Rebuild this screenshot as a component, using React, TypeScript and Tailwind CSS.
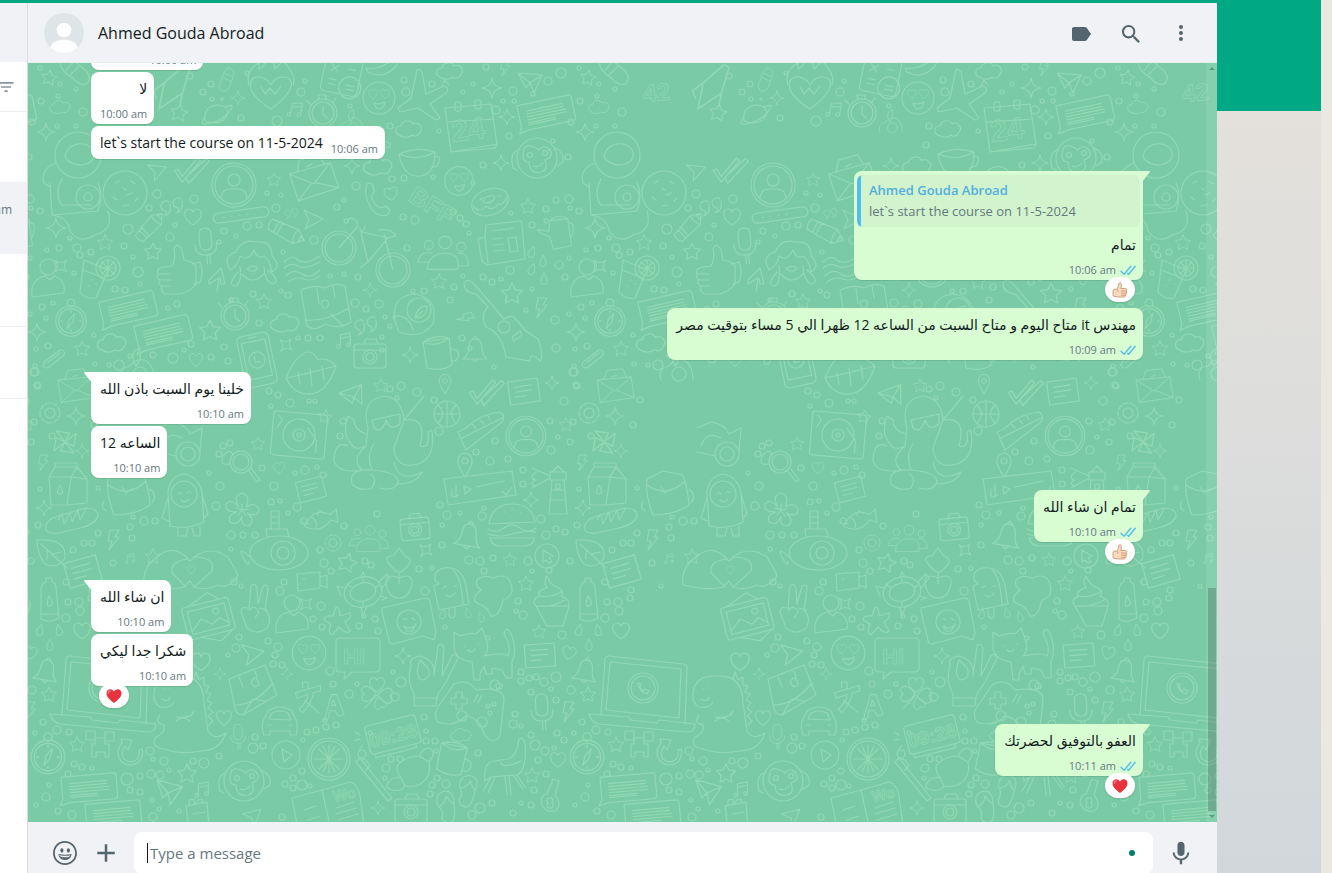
import type { ReactNode } from 'react';
import { MdLabel, MdFilterList } from 'react-icons/md';

type Reaction = 'like' | 'love';

interface Message {
  id: number;
  text: string;
  time: string;
  out?: boolean;
  rtl?: boolean;
  tail?: boolean;
  quote?: { author: string; text: string };
  reaction?: Reaction;
}

const messages: Message[] = [
  { id: 1, text: 'تمام يا هندسه ان', time: '10:00 am', rtl: true },
  { id: 2, text: 'لا', time: '10:00 am', rtl: true },
  { id: 3, text: 'let`s start the course on 11-5-2024', time: '10:06 am' },
  {
    id: 4,
    text: 'تمام',
    time: '10:06 am',
    out: true,
    rtl: true,
    tail: true,
    quote: { author: 'Ahmed Gouda Abroad', text: 'let`s start the course on 11-5-2024' },
    reaction: 'like',
  },
  {
    id: 5,
    text: 'مهندس it متاح اليوم و متاح السبت من الساعه 12 ظهرا الي 5 مساء بتوقيت مصر',
    time: '10:09 am',
    out: true,
    rtl: true,
  },
  { id: 6, text: 'خلينا يوم السبت باذن الله', time: '10:10 am', rtl: true, tail: true },
  { id: 7, text: 'الساعه 12', time: '10:10 am', rtl: true },
  { id: 8, text: 'تمام ان شاء الله', time: '10:10 am', out: true, rtl: true, tail: true, reaction: 'like' },
  { id: 9, text: 'ان شاء الله', time: '10:10 am', rtl: true, tail: true },
  { id: 10, text: 'شكرا جدا ليكي', time: '10:10 am', rtl: true, reaction: 'love' },
  { id: 11, text: 'العفو بالتوفيق لحضرتك', time: '10:11 am', out: true, rtl: true, tail: true, reaction: 'love' },
];

/* ---------- wallpaper ---------- */

const HEART = 'M0 8C-12 0-9-8-4-8C-1-8 0-5 0-5C0-5 1-8 4-8C9-8 12 0 0 8Z';
const STAR = 'M0-10L2.9-4L9.5-3.1L4.8 1.5L5.9 8.1L0 5L-5.9 8.1L-4.8 1.5L-9.5-3.1L-2.9-4Z';

const shapes: Record<string, ReactNode> = {
  star: <path d={STAR} />,
  sparkle: <path d="M0-10Q1-1 10 0Q1 1 0 10Q-1 1-10 0Q-1-1 0-10Z" />,
  heart: <path d={HEART} />,
  drop: <path d="M0-7C3-2 4 0 4 3A4 4 0 0 1-4 3C-4 0-3-2 0-7Z" />,
  cloud: <path d="M-10 6C-15 4-14-3-8-3C-7-9 2-10 4-5C10-8 15-1 11 3C10 7 5 8 3 6C0 9-6 9-10 6Z" />,
  bolt: <path d="M-3-10L6-10L2-3L6-3L-4 10L-1 1L-5 1Z" />,
  music: (
    <>
      <path d="M-4 6V-7L7-9V4M-4-3L7-5" />
      <circle cx="-6" cy="6" r="2" />
      <circle cx="5" cy="4" r="2" />
    </>
  ),
  smile: (
    <>
      <circle r="16" />
      <path d={HEART} transform="translate(-6 -4) scale(.55)" />
      <path d={HEART} transform="translate(6 -4) scale(.55)" />
      <path d="M-5 5Q0 7 6 4Q5 11 0 11Q-4 10-5 5Z" />
    </>
  ),
  avatar: (
    <>
      <circle r="22" />
      <circle r="19" />
      <circle cy="-5" r="6" />
      <path d="M-13 13C-12 3-5 4 0 4S12 3 13 13" />
    </>
  ),
  message: (
    <path d="M-27-13H25Q28-13 28-10V10Q28 13 25 13H-20L-30 15L-27 9ZM-19-6H18M-19-3H18M-19 0H20M-19 3H20M-19 6H8M-19 8H8" />
  ),
  card: <path d="M-15-12H15V11H-15ZM-9-6H8M-9-1H8M-9 4H2" />,
  plane: <path d="M-12-10L12-8L4 10L0 0ZM0 0L12-8M-12-10L-4 5L0 0" />,
  arrow: <path d="M-9-9L10 0L-8 10L-4 1Z" />,
  clock: (
    <>
      <circle r="14" />
      <circle r="11" />
      <path d="M0-7V1L4 5M-4-14L-5-18H3L3-14M-13-9L-17-13M10-11L13-15" />
    </>
  ),
  compass: (
    <>
      <circle r="16" />
      <circle r="13" />
      <circle cy="-19" r="4" />
      <path d="M4-8L2 1L-4 8L-2-1ZM-11 0H-9M9 0H11M0-11V-9M0 9V11" />
    </>
  ),
  envelope: <path d="M-22-10L20-14L24 12L-18 18ZM-22-10L0 4L20-14M-18 18L-2 3M24 12L2 3M-14-11L-10-22L10-24L14-13M-4-14L2-16" />,
  calendar: (
    <>
      <path d="M-24-20L22-24L28 16L-18 24ZM-18 24L26 20L28 16M-22-6L25-9" />
      <rect x="-14" y="-26" width="6" height="9" rx="2" />
      <rect x="6" y="-28" width="6" height="9" rx="2" />
    </>
  ),
  jet: <path d="M-3-30Q-1-32 2-28L6-6L24-14Q30-12 26-7L10 4L20 18L16 20L-2 8L-20 12L-22 8L-9-2ZM22-14L25-20L29-15" />,
  fire: (
    <>
      <path d="M0 24C-30 5-22-10-10-8Q-3-6 0 0Q4-8 12-8C24-8 26 5 0 24Z" />
      <path d="M-22 0Q-26-15-12-22L-12-16Q-6-18-4-28Q4-24 4-16L12-24Q26-10 22 0M-10 2L-6 9L-1 3L4 9L10 1" />
    </>
  ),
  tiles: (
    <>
      <rect x="-19" y="-18" width="37" height="36" rx="4" />
      <path d="M-12-10L-5-3M-5-10L-12-3M5-8H12M-12 5H-5M-12 10H-5" />
      <circle cx="10" cy="10" r="11" />
      <path d="M6 8H14M6 12H14" />
    </>
  ),
  banana: <path d="M-16 2Q0 4 12-8Q18-6 14 0Q2 14-14 6Z" />,
  capsule: <path d="M-8-16Q0-20 5-10L10 4Q12 14 4 16Q-4 14-5 4Q-12-8-8-16ZM-7-6L2-9M-5 0L6-3" />,
  cup: <path d="M-18-8Q0-16 18-10Q18 12 4 14Q-14 16-18-8ZM-18-8Q0 0 18-10M18-6Q26-6 20 4L14 6" />,
  mug: (
    <>
      <path d="M-14-11L12-15L15 12Q4 19-10 15ZM-14-11Q0-5 12-15Q0-19-14-11" />
      <path d="M13-4Q24-4 21 5Q19 9 14 8" />
    </>
  ),
  monkey: (
    <>
      <circle r="20" />
      <path d="M-14-2Q-14-14-6-12Q0-10 2-8Q6-14 12-9Q18-2 8 2Q12 12 4 14Q-8 16-8 4Q-14 4-14-2ZM-4 8Q2 10 6 5M-18-8Q-28-6-24 10L-20 12M18-10Q28-6 26 4L20 8" />
      <circle cx="-7" cy="-3" r="2.5" />
      <circle cx="8" cy="-5" r="2.5" />
    </>
  ),
  astronaut: (
    <>
      <circle cx="0" cy="-10" r="23" />
      <path d="M-13-8C-10-26 14-24 16-12C18 2-6 4-13-8ZM-22-2Q-38 4-34 18L-28 22M-28 18L-26 50L20 46Q26 30 20 18M-26 50Q-10 52-8 66Q2 80 16 70Q36 66 30 46M-16 14Q-24 30-16 40H14" />
      <circle cx="10" cy="32" r="12" />
      <circle cx="10" cy="32" r="4" />
    </>
  ),
  cookie: (
    <>
      <circle r="22" strokeDasharray="9 1" />
      <path d="M-10-10L-6-12M6-12L10-9M-12 4L-8 7M2 2L7 0M-2 13L4 12M10 8L13 5M-2-5L1-3" />
    </>
  ),
  receiver: <path d="M-10-16Q-4-20-3-8Q-8-4-2 4Q4 10 8 6Q16 10 10 15Q-2 18-8 4Q-14-8-10-16Z" />,
  donut: (
    <>
      <ellipse rx="19" ry="13" transform="rotate(-20)" />
      <ellipse cy="-3" rx="6" ry="3" transform="rotate(-20)" />
      <path d="M-17 4Q-10 12-4 4Q2 10 8 2Q14 4 17-6M-10-2L-8-4M8-6L11-6M-2 1L1 1" />
    </>
  ),
  pill: (
    <>
      <rect x="-28" y="-5" width="56" height="10" rx="5" />
      <path d="M-18 0h1M-10 0h1M-2 0h1M6 0h1" />
    </>
  ),
  quotes: <path d="M-4-6A5 5 0 1 0-7 3Q-6 7-9 8Q-1 6-3-4M8-9A5 5 0 1 0 5 0Q6 4 3 5Q11 3 9-7" />,
  pencil: <path d="M-18-5L10-8L20-1L11 7L-17 6Q-20 0-18-5ZM-11-6V6M-7-7V6M10-8Q7-1 11 7M20-1L15-3V3Z" />,
  bike: (
    <>
      <circle cx="-27" cy="0" r="17" />
      <circle cx="-27" cy="0" r="14" />
      <circle cx="27" cy="22" r="17" />
      <circle cx="27" cy="22" r="14" />
      <path d="M-27 0L-8-22Q-10-32-18-29M-6-20L2 14L22-10L-4-16M2 14L-6 20M27 22L18-14M12-18Q26-20 30-12L20-10M-4-16L-1-22" />
    </>
  ),
  people: (
    <>
      <circle cy="-14" r="7" />
      <path d="M-20 16Q-18-2 0-2T14 16Z" />
      <circle cx="-18" cy="-11" r="5" />
      <circle cx="18" cy="-9" r="5" />
      <path d="M-19 8H-30Q-28-5-14-2M16 12H26Q26-4 14-2" />
    </>
  ),
  person: (
    <>
      <circle cy="-15" r="8" />
      <path d="M-16 15Q-18-3-3-6L2-2L6-6Q18-2 16 11Z" />
    </>
  ),
  news: <path d="M-16-18L18-22Q20-22 20-18L23 16L-15 22L-20 18L-24-4L-17-6ZM-10-12L12-15M-10-4L0-5M-9 2L1 1M-8 8L2 7M6-5L14-6L16 8L8 9ZM-17-6L-14 20" />,
  teapot: <path d="M-8-16L12-18L16 12L-4 16L-8 2L-18-2L-22-6Q-16-6-9-4ZM12-14Q22-14 16 2M-8-16Q0-24 12-18" />,
  mic: <path d="M-6-12Q-6-18 0-18T6-12V-2Q6 4 0 4T-6-2ZM-11-2Q-11 9 0 9T11-2M0 9V18M3 9V18" />,
  wig: (
    <>
      <path d="M-22 8Q-30-6-16-10Q-10-24 4-20Q20-22 20-6Q30 4 20 10Q18-2 12-6Q6-2 2-12Q-4 0-12-6Q-14 4-22 8ZM-14 10Q-26 24-16 24Q-10 20-12 4M16 8Q30 20 20 22Q12 18 12 4M-10 12Q0 24 12 12" />
      <path d="M-5 7Q0 2 6 6Q2 12-5 7Z" />
    </>
  ),
  up: <path d="M0 12L2-2L-8 4L-8 0L4-12L8 4L4 4L3-2" />,
  waves: <path d="M-18-6Q-10-14-4-8T18-12M-18 0Q-10-6-4-2T18-6M-16 8Q-8 0 0 6T18 2M-14 14Q-6 8 2 11T18 8" />,
  notebook: <path d="M-24-16Q-10-22 0-18Q10-24 20-20L26 16Q14 24 0 18Q-10 26-18 20ZM-20 14Q0 16 24 2M-8-18L-6-2M8-20L10-8M6 8L18 20M-2 2Q-6-5 0-6Q6-5 2 2Z" />,
  guitar: (
    <>
      <path d="M-38-44Q-34-50-27-42L2-8Q8-12 12-10L24 4L36 12Q42 30 38 34Q28 24 28 34L4 30Q0 6-16 0Q-22-12-14-20L-26-33Q-38-34-38-44Z" />
      <circle cx="2" cy="0" r="6" />
      <path d="M10 10L18 4L20 8L12 14Z" />
    </>
  ),
  parrot: (
    <>
      <path d="M-20 2Q-24-22 0-24Q24-20 18 6Q6 22-16 14L-22-2Q-6-4-2 12" />
      <circle cx="4" cy="-8" r="12" />
      <path d="M0 0Q2-12 12-12Q12 0 0 0L8-7" />
    </>
  ),
  phone: (
    <>
      <rect x="-16" y="-26" width="32" height="52" rx="5" />
      <rect x="-12" y="-19" width="24" height="37" />
      <circle r="8" />
      <path d="M-2-4V2H3M-4-23H4" />
    </>
  ),
  lips: <path d="M-26 8Q-16-16-4-18Q2-18 6-10Q14-14 24-4Q14 26-6 24Q-20 22-26 8ZM-26 8Q-6 4 24-4M-14 2L-12 14M-2-2L0 16M10-4L12 10" />,
  camera: (
    <>
      <rect x="-16" y="-11" width="32" height="24" rx="3" />
      <path d="M-6-11L-4-16H6L8-11M-16-5H16" />
      <circle cy="2" r="7" />
      <circle cy="2" r="4" />
    </>
  ),
  bell: <path d="M-12 8Q-6 4-6-4Q-6-12 0-12T7-4Q7 4 12 8ZM-2-12Q0-17 3-12M-3 8Q0 13 3 8" />,
  clip: <path d="M-10 4L6-8Q12-8 10-3L-6 10Q-13 10-10 4ZM-6 4L6-5" />,
  glass: (
    <>
      <path d="M-12-18L12-8L0 20Q-10 22-16 14ZM-13-8L8 0M-5 2h1M-8 8h1M0 6h1" />
      <circle cx="12" cy="-10" r="12" />
      <circle cx="12" cy="-10" r="8" />
      <path d="M12-18V-2M4-10H20M6-16L18-4M18-16L6-4" />
    </>
  ),
  octopus: (
    <path d="M-22 8Q-36 2-36 24Q-30 36-8 32Q-20 22-4 8L-2-10Q-10-38 14-42Q32-40 34-18L54-42M34-18Q58-22 50 8Q60 12 58-6L62-8Q66 20 48 26Q26 32 24 10L34-18M-4 8Q-16 14-20 4Q-28-4-22-22L-16-18Q-16-8-4-4M2 32Q-22 30-18 46Q-10 54 2 50Q8 40 0 36M2 32Q-4 16 4 6M2 32Q28 34 28 44Q24 54 10 50M24 24Q28 46 52 34Q46 46 28 46M2-18L30-24L30-14Q20-6 16-18Q12-4 4-10Z" />
  ),
  pin: (
    <>
      <path d="M0 12Q-8 0-7-5A7 7 0 0 1 7-5Q8 0 0 12Z" />
      <circle cy="-4" r="3" />
    </>
  ),
  checks: <path d="M-14 3L-11 1L-6 7L5-12L8-10L-5 12ZM0 4L13-13L16-11L1 12L-2 8" />,
  gear: (
    <>
      <circle r="10" strokeDasharray="5 2" />
      <circle r="5" />
    </>
  ),
  turntable: (
    <>
      <rect x="-27" y="-22" width="54" height="44" rx="3" />
      <circle r="16" />
      <circle r="6" />
      <circle r="2" />
      <path d="M8-8L18 4V16M-22-18L-18-14L-22-6" />
    </>
  ),
  magnifier: (
    <>
      <circle r="11" />
      <circle r="8" />
      <path d="M7 8L16 20L19 18L10 6" />
      <circle cx="-18" cy="-16" r="3" />
      <circle cx="-11" cy="-19" r="3" />
      <circle cx="-22" cy="-8" r="3" />
      <path d="M-18-6Q-12-14-8-8M-18-6Q-22 4-12 2" />
    </>
  ),
  ball: (
    <>
      <circle r="13" />
      <path d="M-13 0H13M0-13V13M-9-9Q0 0-9 9M9-9Q0 0 9 9" />
    </>
  ),
  shoe: <path d="M-22 2L-14-2Q0-16 20-18Q26-14 22-8L-14 20ZM-18 8L22-12M-8-6L-4-2M0-10L4-6M8-14L10-10" />,
  windmill: <path d="M0 0L-8-10L4-8ZM0 0L10-8L8 4ZM0 0L8 10L-4 8ZM0 0L-10 8L-8-4Z" />,
  audio: <path d="M-36-8L32-16L36 8L-32 18ZM-28 2V8M-24-2V8M-29 8Q-26 12-22 8M-16-1L-9 2L-15 7ZM-4 0L24-6M22 4L26 8L32 0" />,
  lighthouse: <path d="M-8-18H8V-10H-8ZM-6-18L0-24L6-18M-6-10L-9 24H9L6-10M-7 0H7M-8 10H8M-2-6H2V-1H-2ZM-8-14L-26-22M-8-12L-26-2M-22-18Q-30-12-22-10Q-30-6-22-4" />,
  milk: (
    <>
      <path d="M-20-8L-14-18H8L18-6V18L-2 20H-18ZM-20-8H2L8-18M2-8L-2 20M2-8L18-6M-14-18V-22H8V-18" />
      <path d="M-9 0Q-4 8-9 9T-9 0Z" />
    </>
  ),
  flower: (
    <path d="M-3-3Q-10-14 0-17Q9-14 4-3Q14-9 17 0Q16 8 5 3Q14 10 7 16Q-2 16 0 6Q-4 17-12 12Q-15 5-5 2Q-18 2-16-6Q-11-12-3-3ZM0 0V-6M0 0L6-1M0 0L4 6M0 0L-4 5M0 0L-6-2" />
  ),
  burger: <path d="M-23-2Q-20-22 0-22T23-4ZM-24 3Q-16 8-8 2T8 2T24 2M-24 8Q-12 12 0 8T24 6M-22 12H22Q22 20 10 20H-12Q-20 20-22 12M-8-14h1M0-17h1M8-13h1" />,
  submarine: (
    <>
      <ellipse rx="29" ry="17" />
      <circle cx="4" r="12" />
      <circle cx="4" r="6" />
      <path d="M-12-16L-13-24H8L10-16M-8-24V-42H0V-24M-8-36H0M-8-30H0M-29 4Q-42-8-36 4T-30 8" />
    </>
  ),
  fish: <path d="M-18 4Q-4-16 12-4L20-9L19 6L12 2Q-2 16-18 4ZM-8-4Q-2 2-6 8M-14 2h1M-2-6L2-10L6-6" />,
  bread: <path d="M-26 8Q-28-2-14-6L14-14Q26-14 26-6Q24 2 8 6L-14 11Q-24 12-26 8ZM-14-2L-10-8L-8 2L-2-10L0 0L6-12L8-2L14-13" />,
  radish: <path d="M-2-4Q-20-20-6-20L0-28L6-20Q18-16 2-4ZM0-4V8M0 2Q14-4 13 8Q10 22 0 22T-13 8Q-14-4 0 2" />,
  camcorder: <path d="M-15-8L8-10V6L-14 9ZM8-5L15-7V6L8 3M-9-3h2" />,
  turtle: (
    <>
      <ellipse rx="19" ry="15" transform="rotate(-15)" />
      <ellipse rx="13" ry="9" transform="rotate(-15)" />
      <path d="M16-10L24-18L27-14L19-4M-18-4L-26-6L-22 4M-2 15L0 24L4 14M18 4L24 6L19 8M-2-15L0-20L3-15M-12-5L-16-8M12-4L16-7M0-10V-14M0 10V14" />
    </>
  ),
  cursor: (
    <>
      <circle r="12" />
      <path d="M-4-6L6 0L2 2L5 6L2 7L-1 4L-4 6Z" />
    </>
  ),
  leaf: <path d="M-14-14Q16-16 14 4Q6 16-6 10Q-14 0-14-14ZM-10-10L16 14M-4-4L-4 5M2 0L10-2" />,
  pop: <path d="M-16-16Q-10-24 0-22Q12-20 15-4L18 14L-12 20L-17-4L-12-6L-16-10ZM2-20Q10-14 12 14M-2 18V26Q2 30 4 26V17M-8-2L-5-4M3-4L6-4M-5 5Q0 9 4 3" />,
  splat: <path d="M-16-16Q-10-22 0-18Q14-24 18-12Q22 0 10 4Q6 22-2 20Q-6 10-14 8Q-24 4-12-6Q-18-10-16-16Z" />,
  cupcake: <path d="M-15 4Q-20-2-12-6Q-14-12-4-14Q-8-20-4-26Q0-16 8-14Q14-10 10-6Q20-2 18 4ZM-15 4L-4 24H12L18 4M-12-6Q0-4 10-10M-15 4Q0 6 14-2" />,
  bottle: (
    <>
      <path d="M-8-12Q-6-18-3-18V-22H3V-18Q7-18 7-12L10 18Q0 24-8 19ZM-8 14H9" />
      <path d="M0-4Q6 4 1 6T0-4Z" />
    </>
  ),
  hands: (
    <>
      <path d="M-46 18Q-48 4-38-6Q-18-26-2-8Q0-4 4-10Q20-22 38-10L46 4Q50 10 44 14Q34 22 28 18Q16 24 4 20L0 14L-6 20Q-20 24-46 18ZM-2-8Q-20-6-18 6Q-10 14-4 20M4-10Q26-10 22 4L4 20" />
      <path d={HEART} transform="translate(1 3) scale(.5)" />
    </>
  ),
  photos: (
    <>
      <rect x="-25" y="-15" width="48" height="33" rx="3" />
      <rect x="-20" y="-10" width="38" height="23" />
      <circle cx="8" cy="-4" r="3" />
      <path d="M-20 10L-8 0L2 8L10 3L18 10M-18-15L4-24L14-15M-12 18L6 26L20 18" />
    </>
  ),
  peace: <path d="M-8-2L-6-24Q-2-28 0-22L1-6L6-24Q11-27 11-21L8 0Q16 8 10 18Q0 26-10 18L-16 2Q-16-4-10-2ZM-8 0Q-2-6 2 2L-2 8M2-2L10 0" />,
  starfish: <path d="M-2-14Q2-14 2-5L12-8Q15-4 7 1L12 10Q8 14 1 6L-6 14Q-11 12-7 3L-14-1Q-14-6-5-5Z" />,
  snap: (
    <>
      <path d="M-27-14L16-24Q20-24 21-20L27 10L25 18L14 14L-16 22Q-20 22-20 18L-27-10Z" />
      <circle r="12" />
      <path d="M-6-3H-2M3-4L6-2M-5 4Q2 9 7 2L3 9H-2Z" />
    </>
  ),
  cat: <path d="M-24-20L-18-16Q-8-20-2-18L4-24L8-14Q12 0 6 4Q26 0 30 4Q34-4 26-18Q28-26 32-20Q40-4 34 10V26H28L24 18L14 16V22H8L6 14L2 22L2 28H-4L-6 10Q-22 8-24-4ZM-14-6h1M0-8h1M-10-2Q-6 2-3-3" />,
  chat: <path d="M-18-19H18Q22-19 22-15V11Q22 15 18 15H-6L-14 22L-13 15H-18Q-22 15-22 11V-15Q-22-19-18-19Z" />,
  ok: <path d="M-17-14Q-20-22-8-24Q8-20 6-4L10-34Q14-38 16-32L14-4L24-24Q28-28 30-22L18 2L10 14Q8 20 8 26H-14V14Q-22 0-17-14ZM-8-20Q-14-4-6 0Q4-2 0-12ZM-14 18H10M-14 26H8" />,
  parcel: <path d="M-22-12L14-26L26 4L-8 24Q-14 24-16 18ZM-16 14Q4 14 22-8M-8 24L2 8L14 10M4-4Q-2-8 2-12T8-6ZM-12-14L-8-4M4-20L6-14" />,
  letter: <path d="M-14-8L14-16L14-10L6-8Q4 4-6 14L-10 10Q0 2 0-6L-12-2ZM-6-14V-20H0V-12M-4 0L12 14M18 22L26-6H32L40 16L34 18L30 12L24 12L23 20ZM26 6L28 0L31 6Z" />,
  clover: (
    <>
      <path d={HEART} transform="translate(0 -9)" />
      <path d={HEART} transform="translate(9 3) rotate(90)" />
      <path d={HEART} transform="translate(-9 1) rotate(-90)" />
      <path d={HEART} transform="translate(3 11) rotate(160) scale(.8)" />
      <path d="M0 2L-14 17" />
    </>
  ),
  gamepad: (
    <>
      <path d="M-16-26Q-2-32 6-20Q34-24 34-10L30 26Q22 36 14 24Q10 8-4 6Q-16 18-32 12Q-38 4-30-6Z" />
      <path d="M-14-18H-8V-12H-3V-6H-8V-1H-14V-6H-19V-12H-14ZM4-8L8-16M8-7L12-15" />
      <circle cx="-8" cy="6" r="5" />
      <circle cx="12" cy="12" r="5" />
      <circle cx="18" cy="-4" r="2" />
      <circle cx="24" cy="-6" r="2" />
      <circle cx="20" cy="3" r="2" />
    </>
  ),
  laptop: (
    <>
      <path d="M-38-36Q-38-40-34-40L40-32Q44-32 44-28L42 28M-38-36L-42 18M-33-34L38-27L36 22L-37 14ZM-54 18L-14 21L-12 24L14 27L16 24L52 28Q52 36 44 36L-44 28Q-52 26-54 18Z" />
      <circle cy="-8" r="15" />
      <circle cy="-8" r="12" />
      <path d="M-5-13Q-4-4 4-2L6-5L2-7L0-5L-3-9L-2-12Z" />
    </>
  ),
  dino: <path d="M14 8Q12 16-4 14M-6-1Q-10 6-20 4Q-27 0-26-10Q-24-28-2-27Q24-28 24 0L28 28Q34 38 46 30Q40 48 20 48Q0 52-16 46Q-30 44-24 34Q-14 30-16 22Q-26 20-20 12M14-24L16-31L19-23L24-26L24-18L29-17L26-11L31-9L27-3L32 0L28 5L33 9L28 13L33 18L29 22M-4 18Q2 12 10 18M-16-14h1M-12-15h1M-18-4Q-12 0-10-6" />,
  car: <path d="M-17-2L-12-12Q0-20 12-12L17-1Q18 6 16 12H10V8H-10V12H-16Q-19 4-17-2ZM-11-4L-8-10Q0-14 8-10L11-3ZM-12 2h3M9 2h3" />,
  play: (
    <>
      <circle r="14" />
      <path d="M-4-6L6 0L-2 7Z" />
    </>
  ),
  citrus: (
    <>
      <circle r="21" />
      <circle r="18" />
      <path d="M0-14V14M-14 0H14M-10-10L10 10M10-10L-10 10M-6-13L6 13M6-13L-6 13" />
    </>
  ),
  robot: <path d="M-15-10H-6V-1H-15ZM4-9H13V0H4ZM-6-3H4V3H8V16H4V11H-5V16H-9V3H-6Z" />,
  refresh: <path d="M-8-10Q-16 0-8 9Q0 15 9 9Q14 2 12-4L9-3Q10 4 6 7Q0 11-6 6Q-10 0-5-7L-2-3L2-13L-9-14Z" />,
  fries: <path d="M-11-8L10-12L12 14H-8ZM-8-8V-14L-3-15V-9L1-14L5-15V-11M-4 0L8-2" />,
  book: <path d="M-36-8L-6-16L22-24Q30-22 32-10L36 20M-36-8L-30 22M-6-16L2 20M-24 4L-12 0M-20 14L-8 10M8 2L26-4M8 8L28 2M10 14L30 8" />,
  alarm: <path d="M-26-12Q-26-15-22-15H22Q26-15 26-11V11Q26 14 22 14H-22Q-26 14-26 10ZM-22 14V18H20V14M-36-12L-32-8M-38-4H-33M-36 6L-32 3" />,
  croissant: <path d="M-22 12Q-28 18-18 20Q-10 22-6 16Q8 18 14 10Q20 4 18-8Q26-18 18-22Q12-22 8-14Q-6-14-14-4Q-14 4-10 8Q-18 6-22 12ZM-10 8L-6 16M8-14L18-8" />,
  brush: <path d="M-18-18L-14-22L18 18L14 21ZM-14-22L-8-20L-4-14L-8-10" />,
  sandal: <path d="M-4-14Q8-18 8-2Q10 12 6 16Q-2 18-4 12Q-2 4-8 0Q-12-10-4-14ZM-6 0Q0-4 0-10Q4-4 8-2" />,
  chair: <path d="M-20 16Q-22-4-10-4L2-6Q12-8 14-26Q22-30 20-6Q18 10 10 10L-14 12ZM-4-2Q-2 4 16-4M-14 12L-22 26M-10 12L-17 28M0 11L2 30M4 11L6 30M8 10L18 24M12 10L20 22" />,
  key: <path d="M2-16L8-14L4 0Q12 10 4 16Q-6 18-10 8Q-10 0-4-1ZM-3 8A3 3 0 1 0 1 8A3 3 0 1 0-3 8" />,
  rocket: <path d="M-10 16L-6-4L10-18L14-16L8 4L-4 12ZM-6-4L-14 2L-12 8M8 4L6 14" />,
  planet: (
    <>
      <path d="M-12 6Q-14-8 0-10Q10-10 11-2Q6 12-12 6Z" />
      <path d="M-12 2Q-20 12-6 8T14-6Q18-12 8-8" />
    </>
  ),
  thumb: <path d="M-18 2Q-20-4-12-5L-4-6Q0-12-2-24Q2-30 6-22L8-12Q18-10 20-6V12Q14 20 4 22L-10 22Q-16 20-14 14Q-19 12-16 8Q-20 6-18 2ZM-18 2L-6 2M-16 8H-5M-14 14H-5M16-8L24-10Q28 0 24 10L18 12" />,
  backpack: <path d="M-20-16L-4-24L16-20Q22 0 22 10Q8 20-14 20Q-22 0-20-16ZM-20-10Q0 4 18-14M-24 6Q-28 12-22 16M22-6Q30 0 24 8M-6-8L-2-2L4-6" />,
  suit: (
    <>
      <path d="M-14 24L-16-10Q-14-26 0-28Q14-26 18-10L20 20Q4 28-14 24ZM-16-4L-22 16L-14 20M18-8L24 12L20 16M-6 26V34H2L4 26M8 26L10 34H16V24" />
      <circle cy="-8" r="13" />
      <path d="M-6-8Q-4-11-2-8M3-9Q5-12 7-9M-3-2Q1 2 5-3" />
    </>
  ),
  moped: (
    <>
      <circle cx="6" cy="12" r="12" />
      <circle cx="6" cy="12" r="7" />
      <path d="M-24-14L-10-20Q4-18 8-8L20-14L18 10M-20 4Q-14-12 0-4M-24 10L-6 14" />
    </>
  ),
  plum: (
    <>
      <path d="M-16 10Q-20-2-8-4Q-2-12 6-10Q16-6 16 10M-2-4Q-10-18 2-22Q4-10-2-4" />
      <circle cx="2" cy="4" r="7" />
    </>
  ),
};

// [shape, x, y, scale, rotation]
const doodles: [string, number, number, number?, number?][] = [
  ['star', 49, 78, 0.8, 10], ['capsule', 75, 72, 1, -30], ['cloud', 60, 107, 0.8], ['sparkle', 46, 132, 0.9],
  ['astronaut', 78, 165], ['cookie', 125, 193], ['rocket', 172, 88, 1.3], ['star', 179, 113, 0.9, 10],
  ['capsule', 226, 80, 0.7, 40], ['sparkle', 238, 98, 0.7], ['planet', 217, 115], ['fire', 271, 85],
  ['music', 295, 110, 0.9, 10], ['clock', 323, 113], ['tiles', 342, 76, 1, 12], ['banana', 382, 66],
  ['smile', 379, 98], ['jet', 420, 100], ['cloud', 450, 71], ['sparkle', 492, 88], ['bolt', 505, 68, 0.8],
  ['plane', 530, 83], ['calendar', 469, 128], ['cloud', 409, 129], ['message', 546, 113, 1, -12],
  ['sparkle', 507, 117, 0.8], ['cup', 417, 162], ['monkey', 537, 158], ['plum', 352, 125, 0.7],
  ['arrow', 158, 170, 0.9, -20], ['checks', 190, 170, 1.1, 10], ['avatar', 234, 185], ['star', 274, 180, 0.7],
  ['envelope', 313, 180, 1, -10], ['sparkle', 352, 166, 0.8], ['cloud', 378, 166, 1.1], ['receiver', 377, 200],
  ['heart', 391, 194, 0.8, -10], ['smile', 459, 181, 0.9], ['donut', 490, 202], ['sparkle', 501, 163, 0.8],
  ['star', 528, 207, 0.8], ['sparkle', 56, 228], ['pill', 241, 215, 1, -8], ['quotes', 173, 208],
  ['heart', 193, 217], ['pencil', 150, 227, 0.9, -45], ['quotes', 292, 214, 0.6], ['arrow', 313, 219],
  ['pencil', 286, 232, 1, 28], ['bike', 366, 248], ['people', 445, 255, 0.9], ['news', 502, 243],
  ['teapot', 557, 235, 0.9], ['mic', 206, 246, 1, -5], ['star', 105, 243, 0.8], ['star', 153, 252, 0.9],
  ['wig', 252, 262], ['up', 217, 280], ['waves', 302, 268], ['person', 48, 282], ['sparkle', 61, 266, 0.8, 45],
  ['glass', 96, 278], ['thumb', 176, 272], ['star', 264, 302, 0.8], ['sparkle', 370, 290, 0.7],
  ['notebook', 325, 306], ['clock', 235, 316], ['star', 439, 282, 0.8], ['drop', 532, 252, 0.8, 20],
  ['drop', 532, 269, 0.8, 20], ['drop', 543, 261, 0.8], ['drop', 544, 279, 0.8], ['bolt', 541, 308],
  ['star', 512, 294, 1.1], ['guitar', 502, 327], ['bolt', 465, 318, 0.8, 60], ['parrot', 415, 318],
  ['compass', 71, 321, 0.95], ['message', 128, 309, 1, -13], ['message', 163, 333, 1, -13],
  ['cloud', 112, 343, 1.1], ['star', 210, 331, 1.1], ['cloud', 285, 323, 1.1], ['quotes', 367, 327],
  ['phone', 257, 360, 1, -12], ['sparkle', 286, 345, 0.8, 40], ['lips', 312, 370], ['camera', 370, 355],
  ['music', 344, 341, 0.9], ['mug', 437, 353], ['bell', 475, 351], ['sparkle', 410, 355, 0.8],
  ['sparkle', 37, 332, 0.9], ['clip', 54, 358], ['star', 82, 349, 0.8], ['plum', 138, 370],
  ['heart', 196, 360, 0.8], ['plane', 354, 397, 1, -25], ['star', 381, 386, 0.7], ['octopus', 370, 438],
  ['pin', 445, 384, 0.8], ['checks', 485, 392, 1.1, 10], ['card', 524, 392, 1, -8], ['sparkle', 552, 383, 0.7],
  ['envelope', 76, 388, 0.8], ['gear', 50, 413], ['sparkle', 76, 416, 0.9], ['turntable', 299, 435, 1, 5],
  ['star', 325, 417, 0.7, 10], ['magnifier', 241, 462], ['star', 258, 444, 0.7], ['ball', 447, 414],
  ['shoe', 480, 430], ['avatar', 526, 436, 0.9], ['star', 566, 425, 0.7], ['windmill', 65, 442, 1.1],
  ['sparkle', 82, 451, 0.7], ['moped', 182, 442], ['pin', 465, 465], ['heart', 279, 468, 0.7],
  ['card', 311, 490, 0.9, -14], ['audio', 480, 487], ['lighthouse', 558, 490], ['bolt', 43, 463, 0.8],
  ['milk', 69, 485], ['backpack', 128, 495], ['suit', 184, 502], ['sparkle', 531, 500, 0.8],
  ['sparkle', 44, 508, 0.8], ['flower', 242, 510], ['burger', 512, 526], ['submarine', 279, 553],
  ['fish', 320, 520, 0.9, -10], ['people', 370, 540, 0.7], ['camera', 415, 528, 0.9, -5], ['bell', 468, 537, 1.1, 10],
  ['bread', 72, 522], ['bolt', 113, 540, 1], ['star', 153, 557, 0.8], ['gear', 333, 543, 0.8],
  ['star', 347, 563, 1, 15], ['sparkle', 426, 550, 0.8, 40], ['radish', 399, 576], ['camcorder', 312, 582],
  ['turtle', 363, 592], ['star', 510, 560, 0.7], ['cursor', 547, 556], ['leaf', 51, 554], ['card', 83, 572, 1.1, -16],
  ['music', 130, 559, 0.6], ['pop', 451, 590], ['splat', 493, 596], ['star', 526, 584, 0.8], ['cupcake', 551, 602],
  ['bottle', 49, 600], ['hands', 190, 567], ['photos', 209, 617, 1, -14], ['peace', 257, 610], ['person', 292, 618],
  ['sparkle', 306, 604, 0.8, 45], ['starfish', 338, 621], ['snap', 409, 622], ['drop', 443, 614, 0.7, 15],
  ['drop', 468, 613, 0.7, -15], ['drop', 481, 617, 0.7, -15], ['cat', 478, 652], ['star', 539, 632, 0.7],
  ['drop', 40, 630, 0.8, 15], ['drop', 59, 630, 0.8, -10], ['drop', 50, 645, 0.8], ['heart', 82, 631],
  ['card', 540, 656, 1, -4], ['heart', 569, 653, 0.8, 15], ['bell', 46, 672, 1, 10], ['smile', 309, 653, 1.05],
  ['chat', 358, 657], ['arrow', 253, 653, 1.1, -10], ['heart', 201, 662, 1.1], ['sparkle', 220, 674, 0.6],
  ['sparkle', 287, 674, 0.6], ['sparkle', 403, 656, 0.8], ['ok', 428, 680], ['parcel', 251, 691],
  ['letter', 308, 700, 0.9], ['clover', 377, 693, 0.9], ['gamepad', 470, 710], ['star', 49, 695, 0.8],
  ['laptop', 104, 696], ['dino', 180, 703], ['heart', 224, 718, 0.9], ['car', 280, 723], ['mic', 238, 737, 0.7],
  ['mic', 542, 712, 1, -3], ['bolt', 568, 712, 1], ['alarm', 393, 735, 1, -14], ['play', 286, 755], ['citrus', 329, 759],
  ['monkey', 244, 781, 1], ['compass', 48, 757, 1.05], ['star', 77, 745, 0.8], ['robot', 101, 741], ['refresh', 130, 753],
  ['star', 187, 774, 1], ['message', 89, 788, 1, -5], ['plane', 168, 793, 1.1, 10], ['music', 202, 790, 0.9],
  ['message', 113, 815, 1, -5], ['fries', 197, 814], ['arrow', 254, 815, 0.9, -40], ['book', 328, 806],
  ['mug', 451, 758, 1, 20], ['croissant', 411, 770], ['brush', 374, 780], ['camera', 411, 810], ['sparkle', 378, 808, 0.7],
  ['sandal', 446, 806], ['sandal', 467, 790, 1, 20], ['chair', 505, 765], ['heart', 558, 760, 0.9], ['star', 532, 776, 0.8],
  ['key', 551, 795], ['cloud', 461, 735, 0.8],
];

// [x, y, radius]
const bubbles: [number, number, number][] = [
  [40, 68, 2], [60, 84, 2], [58, 96, 2], [41, 101, 3], [76, 89, 2], [83, 112, 4], [32, 122, 3], [57, 126, 2], [76, 126, 2],
  [190, 76, 3], [203, 92, 3], [211, 84, 3], [212, 99, 2], [222, 99, 1], [241, 118, 3], [277, 121, 5], [301, 92, 4],
  [247, 73, 2], [305, 81, 2], [350, 106, 2], [404, 80, 3], [432, 84, 3], [406, 92, 4], [463, 92, 2], [473, 84, 2],
  [513, 91, 4], [548, 81, 4], [503, 101, 2], [514, 101, 2], [496, 110, 4], [533, 94, 2], [561, 73, 5], [486, 67, 3],
  [390, 126, 3], [439, 131, 2], [387, 145, 3], [509, 136, 3], [553, 141, 2], [568, 157, 3], [483, 165, 3], [473, 183, 2],
  [433, 177, 2], [392, 179, 3], [404, 178, 3], [356, 186, 4], [267, 193, 2], [281, 195, 2], [276, 208, 4], [337, 207, 3],
  [344, 200, 2], [403, 217, 3], [415, 220, 4], [453, 212, 3], [460, 218, 3], [466, 224, 3], [469, 233, 2], [546, 209, 3],
  [556, 200, 3], [569, 199, 4], [532, 225, 3], [546, 221, 2], [511, 213, 2], [247, 226, 4], [259, 225, 3], [224, 231, 3],
  [219, 242, 2], [236, 236, 2], [314, 240, 4], [283, 252, 2], [346, 221, 2], [407, 248, 3], [330, 276, 2], [344, 274, 2],
  [358, 277, 3], [483, 277, 3], [492, 282, 3], [501, 279, 2], [510, 270, 4], [532, 289, 2], [559, 265, 4], [565, 277, 3],
  [413, 291, 2], [424, 291, 3], [454, 287, 3], [463, 276, 2], [355, 303, 4], [366, 309, 3], [379, 304, 4], [385, 317, 2],
  [526, 310, 2], [555, 320, 4], [556, 348, 4], [253, 294, 3], [281, 291, 2], [288, 295, 3], [259, 323, 3], [450, 300, 3],
  [462, 338, 3], [470, 348, 2], [390, 326, 2], [382, 337, 2], [382, 350, 2], [298, 338, 2], [308, 338, 3], [320, 338, 3],
  [211, 357, 3], [224, 347, 3], [228, 361, 3], [494, 367, 2], [574, 372, 4], [574, 366, 2], [34, 372, 4], [37, 385, 3],
  [40, 211, 3], [30, 258, 2], [31, 208, 2], [47, 250, 2], [59, 248, 3], [77, 248, 4], [80, 255, 3], [91, 252, 3],
  [124, 246, 3], [133, 257, 2], [70, 238, 2], [128, 229, 5], [149, 208, 3], [157, 194, 4], [194, 199, 4], [170, 237, 4],
  [175, 225, 2], [74, 273, 2], [115, 289, 3], [125, 290, 3], [138, 272, 5], [140, 284, 2], [42, 307, 3], [53, 303, 2],
  [46, 318, 2], [30, 314, 2], [168, 308, 2], [177, 304, 3], [94, 335, 2], [48, 346, 3], [36, 349, 2], [95, 364, 2],
  [109, 365, 2], [119, 365, 5], [130, 356, 2], [153, 355, 3], [173, 358, 5], [191, 344, 3], [184, 350, 2], [231, 300, 2],
  [34, 422, 3], [52, 436, 3], [94, 425, 3], [101, 400, 3], [40, 489, 2], [98, 488, 2], [38, 525, 3], [98, 533, 3],
  [130, 527, 3], [144, 521, 4], [155, 521, 3], [132, 538, 3], [133, 517, 2], [92, 543, 3], [84, 543, 3], [73, 550, 3],
  [269, 391, 3], [278, 395, 3], [290, 403, 4], [309, 401, 2], [315, 401, 2], [271, 406, 2], [340, 436, 3], [343, 421, 3],
  [397, 398, 2], [390, 389, 3], [401, 386, 4], [434, 400, 3], [417, 392, 4], [439, 431, 4], [476, 452, 3], [495, 441, 3],
  [490, 461, 4], [508, 459, 3], [550, 421, 3], [551, 450, 4], [570, 442, 3], [558, 437, 2], [564, 401, 4], [577, 386, 3],
  [262, 468, 3], [274, 486, 4], [295, 473, 2], [305, 470, 4], [317, 467, 2], [220, 486, 4], [209, 473, 2], [216, 506, 4],
  [231, 535, 4], [243, 535, 3], [255, 535, 3], [231, 549, 2], [271, 502, 3], [280, 501, 2], [297, 507, 4], [288, 513, 2],
  [323, 475, 3], [344, 526, 3], [320, 550, 3], [324, 563, 4], [331, 571, 3], [365, 561, 3], [371, 565, 3], [419, 569, 3],
  [304, 521, 3], [377, 514, 3], [440, 505, 3], [447, 515, 4], [442, 525, 2], [442, 545, 3], [484, 508, 2], [482, 516, 4],
  [460, 513, 2], [523, 470, 3], [523, 484, 3], [541, 519, 4], [546, 535, 4], [556, 529, 3], [565, 532, 3], [570, 561, 3],
  [469, 560, 4], [480, 561, 4], [493, 558, 3], [484, 571, 3], [528, 561, 4], [549, 570, 3], [532, 571, 2], [66, 582, 3],
  [68, 602, 3], [79, 602, 4], [80, 611, 4], [113, 563, 3], [122, 586, 2], [66, 618, 4], [91, 598, 3], [92, 590, 3],
  [234, 582, 3], [241, 586, 2], [284, 582, 3], [280, 591, 4], [321, 606, 4], [322, 627, 3], [313, 619, 3], [378, 631, 3],
  [375, 619, 3], [359, 626, 3], [364, 616, 2], [425, 591, 4], [432, 568, 2], [445, 627, 2], [518, 601, 3], [516, 611, 2],
  [523, 615, 4], [562, 635, 4], [239, 637, 3], [236, 648, 4], [228, 655, 2], [278, 647, 4], [275, 655, 3], [268, 641, 3],
  [273, 664, 3], [282, 665, 3], [330, 671, 4], [333, 684, 3], [349, 694, 4], [357, 684, 2], [401, 682, 5], [393, 672, 2],
  [395, 697, 4], [488, 638, 2], [495, 685, 5], [499, 686, 3], [521, 681, 3], [521, 672, 3], [529, 678, 3], [536, 677, 3],
  [544, 682, 4], [556, 677, 5], [551, 689, 2], [571, 690, 4], [531, 692, 3], [556, 700, 3], [513, 724, 4], [515, 714, 3],
  [521, 726, 2], [424, 717, 3], [426, 731, 2], [426, 741, 3], [435, 741, 3], [436, 751, 2], [391, 759, 3], [400, 759, 3],
  [386, 768, 4], [385, 778, 2], [362, 754, 4], [478, 753, 3], [437, 778, 3], [446, 784, 4], [432, 785, 3], [430, 794, 3],
  [557, 733, 3], [564, 740, 3], [535, 745, 5], [545, 751, 4], [554, 748, 2], [531, 735, 3], [538, 760, 3], [546, 774, 3],
  [534, 790, 3], [492, 803, 3], [480, 808, 5], [472, 815, 4], [513, 813, 3], [531, 805, 3], [521, 803, 2], [35, 733, 2],
  [57, 730, 4], [69, 732, 3], [43, 722, 3], [68, 774, 3], [74, 764, 3], [82, 767, 3], [92, 768, 2], [127, 779, 6],
  [140, 776, 3], [151, 774, 4], [160, 775, 4], [169, 770, 2], [164, 761, 4], [150, 751, 4], [153, 759, 2], [193, 761, 3],
  [204, 763, 5], [219, 756, 3], [253, 748, 5], [263, 746, 3], [255, 737, 3], [307, 732, 3], [316, 730, 3], [326, 727, 3],
  [336, 725, 3], [303, 740, 2], [285, 784, 3], [293, 778, 3], [302, 785, 5], [310, 786, 2], [302, 771, 3], [293, 788, 3],
  [46, 797, 4], [36, 805, 2], [58, 811, 3], [49, 785, 2], [130, 790, 3], [140, 792, 3], [152, 800, 2], [153, 817, 4],
  [159, 809, 2], [179, 811, 2], [72, 815, 4], [282, 817, 3], [325, 720, 2], [370, 733, 2],
];

const outlined = [
  { text: '24', x: 453, y: 142, size: 30, rotate: -8 },
  { text: 'BFF', x: 407, y: 200, size: 25, rotate: 32 },
  { text: 'Hi', x: 343, y: 664, size: 22, rotate: 0 },
  { text: '09:28', x: 371, y: 748, size: 19, rotate: -14 },
  { text: '42', x: 644, y: 102, size: 24, rotate: -5 },
  { text: 'Wo', x: 334, y: 802, size: 15, rotate: -12 },
];

const TILE = 539;

const Wallpaper = () => (
  <svg
    aria-hidden="true"
    className="absolute inset-0 h-full w-full"
    fill="none"
    stroke="#91d8b3"
    strokeWidth="1.2"
    strokeLinejoin="round"
    strokeLinecap="round"
  >
    <defs>
      <g id="doodles">
        {doodles.map(([shape, x, y, scale = 1, rotation = 0], idx) => (
          <g key={idx} transform={`translate(${x} ${y}) rotate(${rotation}) scale(${scale})`}>
            {shapes[shape]}
          </g>
        ))}
        {bubbles.map(([x, y, r], idx) => (
          <circle key={idx} cx={x} cy={y} r={r} />
        ))}
        {outlined.map((o) => (
          <text
            key={o.text}
            transform={`translate(${o.x} ${o.y}) rotate(${o.rotate})`}
            fontFamily="Liberation Sans, sans-serif"
            fontWeight="bold"
            fontSize={o.size}
            strokeWidth="0.7"
          >
            {o.text}
          </text>
        ))}
      </g>
    </defs>
    <g transform="translate(-28 -63)">
      {[-1, 0, 1, 2, 3].map((n) => (
        <use key={n} href="#doodles" x={n * TILE} />
      ))}
    </g>
  </svg>
);

/* ---------- small icons ---------- */

const icons = {
  search:
    'M15.9 14.3H15l-.3-.3c1-1.1 1.6-2.7 1.6-4.3 0-3.7-3-6.7-6.7-6.7S3 6 3 9.7s3 6.7 6.7 6.7c1.6 0 3.2-.6 4.3-1.6l.3.3v.8l5.1 5.1 1.5-1.5-5-5.2zm-6.2 0c-2.6 0-4.6-2.1-4.6-4.6s2.1-4.6 4.6-4.6 4.6 2.1 4.6 4.6-2 4.6-4.6 4.6z',
  menu: 'M12 7a2 2 0 1 0-.001-4.001A2 2 0 0 0 12 7zm0 2a2 2 0 1 0-.001 3.999A2 2 0 0 0 12 9zm0 6a2 2 0 1 0-.001 3.999A2 2 0 0 0 12 15z',
  smiley:
    'M9.153 11.603c.795 0 1.439-.879 1.439-1.962s-.644-1.962-1.439-1.962-1.439.879-1.439 1.962.644 1.962 1.439 1.962zm-3.204 1.362c-.026-.307-.131 5.218 6.063 5.551 6.066-.25 6.066-5.551 6.066-5.551-6.078 1.416-12.129 0-12.129 0zm11.363 1.108s-.669 1.959-5.051 1.959c-3.505 0-5.388-1.164-5.607-1.959 0 0 5.912 1.055 10.658 0zM11.804 1.011C5.609 1.011.978 6.033.978 12.228s4.826 10.761 11.021 10.761S23.02 18.423 23.02 12.228c.001-6.195-5.021-11.217-11.216-11.217zM12 21.354c-5.273 0-9.381-3.886-9.381-9.159s3.942-9.548 9.215-9.548 9.548 4.275 9.548 9.548c-.001 5.272-4.109 9.159-9.382 9.159zm3.108-9.751c.795 0 1.439-.879 1.439-1.962s-.644-1.962-1.439-1.962-1.439.879-1.439 1.962.644 1.962 1.439 1.962z',
  plus: 'M19 13h-6v6h-2v-6H5v-2h6V5h2v6h6v2z',
  mic: 'M11.999 14.942c2.001 0 3.531-1.53 3.531-3.531V4.35c0-2.001-1.53-3.531-3.531-3.531S8.469 2.35 8.469 4.35v7.061c0 2.001 1.53 3.531 3.53 3.531zm6.238-3.53c0 3.531-2.942 6.002-6.237 6.002s-6.237-2.471-6.237-6.002H3.761c0 4.001 3.178 7.297 7.061 7.885v3.884h2.354v-3.884c3.884-.588 7.061-3.884 7.061-7.885h-2z',
};

const Icon = ({ name, className = 'h-6 w-6' }: { name: keyof typeof icons; className?: string }) => (
  <svg viewBox="0 0 24 24" className={className} fill="currentColor">
    <path d={icons[name]} />
  </svg>
);

const Ticks = () => (
  <svg viewBox="0 0 16 11" className="h-[11px] w-4" fill="none" stroke="#53bdeb" strokeWidth="1.4" strokeLinecap="round">
    <path d="M1 6.2L4.2 9.3L10.8 1.2M7.6 8.4L8.6 9.3L15.2 1.2" />
  </svg>
);

const ReactionIcon = ({ type }: { type: Reaction }) =>
  type === 'love' ? (
    <svg viewBox="0 0 16 16" className="h-4 w-4">
      <path
        d="M8 15C3.5 11.500.5 8.800.5 5.200.5 2.800 2.200 1.200 4.300 1.200 6 1.200 7.300 2.100 8 3.600 8.700 2.100 10 1.200 11.700 1.200c2.100 0 3.800 1.600 3.800 4 0 3.600-3 6.300-7.500 9.800z"
        fill="#e8323c"
      />
      <path d="M2.200 5.400C2.200 3.800 3.200 2.900 4.500 2.900" fill="none" stroke="#f4858c" strokeWidth="1.2" strokeLinecap="round" />
    </svg>
  ) : (
    <svg viewBox="0 0 16 16" className="h-4 w-4" strokeLinejoin="round" strokeLinecap="round">
      <path
        d="M1 8.500C1 7.600 1.800 7.200 2.800 7.200H4.600C6 6 6.600 4 6.700 1.800 6.800.4 9 .4 9.300 2.200 9.600 3.800 9.200 5.400 8.900 6.500H13.500C15 6.500 15.200 8.400 14.200 8.900 15.200 9.500 15 10.900 14 11.200 14.700 12 14.300 13.100 13.300 13.300 13.600 14.300 12.900 15 12 15H6.500C4.500 15 3.800 14.300 1.800 14.200 1 14.200 1 13.500 1 13Z"
        fill="#f9d9bd"
        stroke="#c98f6b"
        strokeWidth="0.8"
      />
      <path
        d="M9.500 9H14M9.500 11.200H13.800M9.500 13.300H13.200M4.600 7.200C5.400 8 6 8.500 6.200 9.500"
        fill="none"
        stroke="#c98f6b"
        strokeWidth="0.8"
      />
    </svg>
  );

const Avatar = () => (
  <svg viewBox="0 0 40 40" className="h-10 w-10 shrink-0">
    <clipPath id="avatar-clip">
      <circle cx="20" cy="20" r="20" />
    </clipPath>
    <g clipPath="url(#avatar-clip)">
      <rect width="40" height="40" fill="#dfe5e7" />
      <circle cx="20" cy="17" r="7.3" fill="#fff" />
      <ellipse cx="20" cy="36" rx="14" ry="9.5" fill="#fff" />
    </g>
  </svg>
);

/* ---------- conversation ---------- */

const Bubble = ({ message }: { message: Message }) => {
  const { text, time, out, rtl, tail, quote, reaction } = message;
  return (
    <div
      className={`flex ${out ? 'justify-end' : 'justify-start'} ${tail ? 'pt-3' : 'pt-0.5'} ${reaction ? 'pb-[26px]' : ''}`}
    >
      <div
        className={`relative rounded-lg text-[#111b21] shadow-[0_1px_1px_rgba(11,20,26,0.13)] ${
          out ? 'bg-[#d9fdd3]' : 'bg-white'
        } ${tail ? (out ? 'rounded-tr-none' : 'rounded-tl-none') : ''}`}
      >
        {tail && (
          <svg
            viewBox="0 0 8 13"
            className={`absolute top-0 h-[13px] w-2 ${out ? '-right-[7px]' : '-left-[7px]'}`}
            fill={out ? '#d9fdd3' : '#fff'}
          >
            <path d={out ? 'M0 0H7Q8.5 0 7.5 1.5L0 11Z' : 'M8 0H1Q-.5 0 .5 1.5L8 11Z'} />
          </svg>
        )}
        {quote && (
          <div className="px-[3px] pb-px pt-1">
            <div className="flex min-w-[283px] overflow-hidden rounded-md bg-[#d1f4cc]">
              <span className="w-1 bg-[#53bdeb]" />
              <div className="px-2 py-1 text-[13px]">
                <p className="font-semibold leading-[22px] text-[#53aee0]">{quote.author}</p>
                <p className="pb-0.5 leading-5 text-[#667781]">{quote.text}</p>
              </div>
            </div>
          </div>
        )}
        <div className={`flex pb-[3px] pl-[9px] pr-[7px] pt-[7px] ${rtl ? 'flex-col gap-2' : 'gap-2'}`}>
          <p dir="auto" className={`text-[14px] ${rtl ? 'leading-5' : 'mb-1 leading-[19px]'}`}>
            {text}
          </p>
          <div className="flex items-center gap-1 self-end text-[11px] leading-[14px] text-[#667781]">
            <time>{time}</time>
            {out && <Ticks />}
          </div>
        </div>
        {reaction && (
          <button
            type="button"
            aria-label={reaction}
            className={`absolute -bottom-[22px] flex h-[25px] w-[30px] items-center justify-center rounded-full bg-white shadow-sm ${
              out ? 'right-2' : 'left-2'
            }`}
          >
            <ReactionIcon type={reaction} />
          </button>
        )}
      </div>
    </div>
  );
};

const Sidebar = () => (
  <aside className="flex w-7 shrink-0 flex-col overflow-hidden border-r border-[#d9dde0] bg-white">
    <div className="h-[59px] shrink-0 bg-[#f0f2f5]" />
    <div className="flex h-[50px] shrink-0 items-center border-b border-[#e9edef]">
      <button type="button" aria-label="Filter" className="-ml-1 text-[#8696a0]">
        <MdFilterList className="h-5 w-5" />
      </button>
    </div>
    <div className="h-[70px] shrink-0" />
    <div className="flex h-[72px] shrink-0 justify-end bg-[#f0f2f5] pr-[15px] pt-[18px] text-[12px] leading-5 text-[#667781]">
      am
    </div>
    <div className="h-[73px] shrink-0 border-b border-[#e9edef]" />
    <div className="h-[72px] shrink-0 border-b border-[#e9edef]" />
  </aside>
);

export default function App() {
  return (
    <div className="flex h-screen overflow-hidden bg-[#ebe7e1] font-['Open_Sans','Noto_Sans','DejaVu_Sans',sans-serif]">
      <div className="flex min-w-0 flex-1 border-t-[3px] border-[#00a884]">
        <Sidebar />

        <main className="flex min-w-0 flex-1 flex-col">
          <header className="flex h-[60px] shrink-0 items-center border-b border-[#e3f1ec] bg-[#f0f2f5] px-4">
            <Avatar />
            <h1 className="ml-[14px] flex-1 text-[16px] leading-5 text-[#111b21]">Ahmed Gouda Abroad</h1>
            <div className="flex gap-[26px] pr-2 pt-0.5 text-[#54656f]">
              <button type="button" aria-label="Label">
                <MdLabel className="h-6 w-6" />
              </button>
              <button type="button" aria-label="Search">
                <Icon name="search" />
              </button>
              <button type="button" aria-label="Menu">
                <Icon name="menu" />
              </button>
            </div>
          </header>

          <section className="relative flex min-h-0 flex-1 flex-col justify-end overflow-hidden bg-[#7acba5]">
            <Wallpaper />
            <div className="relative pb-5 pl-[63px] pr-[74px]">
              {messages.map((message) => (
                <Bubble key={message.id} message={message} />
              ))}
            </div>
            {/* scrollbar */}
            <div className="absolute inset-y-0 right-0 flex w-[11px] flex-col items-center justify-between bg-white/10 py-1 text-[#5b9c80]">
              <span className="border-x-[3px] border-b-[3px] border-x-transparent border-b-current" />
              <span className="border-x-[3px] border-t-[3px] border-x-transparent border-t-current" />
            </div>
            <div className="absolute bottom-[11px] right-[1px] h-[223px] w-2 bg-[#0b141a]/20" />
          </section>

          <footer className="flex h-[51px] shrink-0 items-start overflow-hidden bg-[#f0f2f5] pl-6 pr-6 pt-2.5 text-[#54656f]">
            <button type="button" aria-label="Emoji" className="mt-2">
              <Icon name="smiley" className="h-[26px] w-[26px]" />
            </button>
            <button type="button" aria-label="Attach" className="ml-[13px] mt-1.5">
              <Icon name="plus" className="h-[30px] w-[30px]" />
            </button>
            <label className="ml-[13px] flex h-[42px] flex-1 items-center rounded-lg bg-white pl-[13px] pr-[18px]">
              <span className="h-5 w-px bg-[#111b21]" />
              <input
                type="text"
                aria-label="Type a message"
                placeholder="Type a message"
                className="ml-0.5 flex-1 bg-transparent text-[15px] outline-none placeholder:text-[#667781]"
              />
              <span className="h-1.5 w-1.5 rounded-full bg-[#008069]" />
            </label>
            <button type="button" aria-label="Record" className="ml-4 mt-[9px]">
              <Icon name="mic" />
            </button>
          </footer>
        </main>
      </div>

      <div className="flex w-[104px] shrink-0 flex-col">
        <div className="h-[111px] shrink-0 bg-[#00a884]" />
        <div className="flex-1 bg-gradient-to-b from-[#e4e1dc] to-[#d1d7db]" />
      </div>
      <div className="w-[11px] shrink-0" />
    </div>
  );
}
